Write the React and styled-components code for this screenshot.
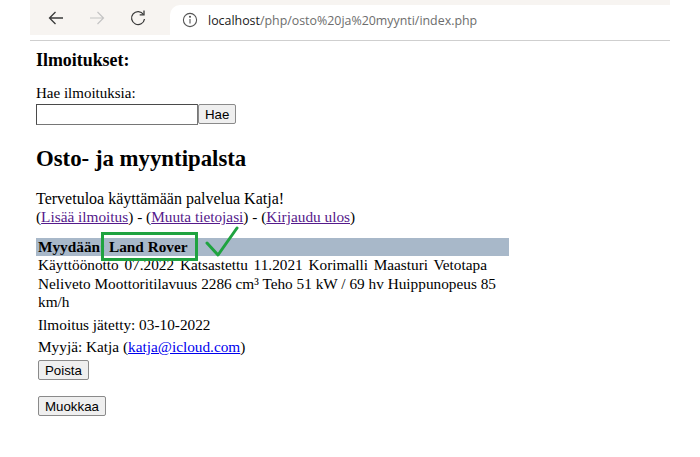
import React from "react";
import styled, { createGlobalStyle } from "styled-components";

const Global = createGlobalStyle`
  html, body { margin: 0; padding: 0; background: #fff; }
  body { font-family: "Liberation Serif", "Times New Roman", serif; font-size: 15.3px; color: #000; }
`;

const Page = styled.div`
  position: relative;
  min-height: 457px;
`;

const Chrome = styled.div`
  margin: 0 30px;
  height: 40px;
  border-bottom: 1px solid #cfcfcf;
  display: flex;
  flex-direction: column;
`;

const ToolBar = styled.div`
  height: 35px;
  background: #f7f4f1;
  display: flex;
  align-items: center;
`;

const NavButton = styled.div`
  width: 41px;
  height: 35px;
  display: flex;
  align-items: center;
  justify-content: center;
  flex: none;
  &:first-child { margin-left: 5px; }
`;

const AddressBar = styled.div`
  flex: 1;
  align-self: stretch;
  margin: 5px 0 0 12px;
  background: #fff;
  border-radius: 10px 0 0 0;
  display: flex;
  align-items: center;
  padding-left: 12px;
  gap: 10px;
  font-family: "Open Sans", "Noto Sans", sans-serif;
  font-size: 12.4px;
  color: #6d6d6d;
`;

const Host = styled.span`
  color: #202020;
`;

const Content = styled.main`
  padding: 0 0 0 36px;
`;

const SectionTitle = styled.h3`
  font-size: 17.9px;
  font-weight: bold;
  margin: 9px 0 13px;
`;

const SearchForm = styled.form`
  margin: 0;
  font-size: 15px;
  line-height: 18px;
`;

const SearchInput = styled.input`
  box-sizing: border-box;
  width: 162px;
  height: 21px;
  margin: 2px 0 0;
  padding: 0 2px;
  border: 1px solid #767676;
  border-top-color: #4a4a4a;
  border-left-color: #4a4a4a;
  vertical-align: top;
  font-size: 13px;
`;

const Button = styled.button`
  box-sizing: border-box;
  height: 20px;
  padding: 0 ${(p) => p.$px || 6}px;
  font-family: "Liberation Sans", Arial, sans-serif;
  font-size: 13.3px;
  color: #000;
  background: #efefef;
  border: 1px solid #8a8a8a;
  border-radius: 2px;
  vertical-align: top;
  margin: ${(p) => p.$m || "0"};
`;

const PageTitle = styled.h2`
  font-size: 22.8px;
  font-weight: bold;
  margin: 21px 0 18px;
`;

const Welcome = styled.p`
  margin: 0 0 12px;
  line-height: 18px;
`;

const Greeting = styled.span`
  font-size: 16px;
`;

const Link = styled.a`
  color: ${(p) => (p.$visited ? "#551a8b" : "#0000ee")};
  text-decoration: underline;
`;

const AdTable = styled.table`
  width: 473px;
  border-spacing: 0;
  border-collapse: collapse;
`;

const HeadCell = styled.th`
  background: #a8b8c9;
  text-align: left;
  padding: 0 2px;
  height: 18px;
  line-height: 18px;
  font-weight: bold;
`;

const Cell = styled.td`
  padding: ${(p) => p.$pad || "2px 2px 1.5px"};
  line-height: 18.5px;
`;

const Spaced = styled.span`
  word-spacing: 1.9px;
`;

const ButtonStack = styled.div`
  display: flex;
  flex-direction: column;
  align-items: flex-start;
  gap: 16px;
  padding-top: 0;
`;

const Annotation = styled.svg`
  position: absolute;
  left: 0;
  top: 0;
  overflow: visible;
  pointer-events: none;
`;

const BackIcon = () => (
  <svg width="18" height="18" viewBox="0 0 18 18" fill="none" stroke="#3a3a3a" strokeWidth="1.3">
    <path d="M16 9H2.5M8.5 3L2.5 9l6 6" />
  </svg>
);
const FwdIcon = () => (
  <svg width="18" height="18" viewBox="0 0 18 18" fill="none" stroke="#c4c4c4" strokeWidth="1.2">
    <path d="M2 9h13.5M9.5 3l6 6-6 6" />
  </svg>
);
const ReloadIcon = () => (
  <svg width="18" height="18" viewBox="0 0 18 18" fill="none" stroke="#3a3a3a" strokeWidth="1.3">
    <path d="M14.5 5.5A6.5 6.5 0 1 0 15.5 10" />
    <path d="M15 1.5v4.3h-4.3" />
  </svg>
);
const InfoIcon = () => (
  <svg width="16" height="16" viewBox="0 0 16 16" fill="none" stroke="#555" strokeWidth="1.1">
    <circle cx="8" cy="8" r="6.6" />
    <path d="M8 7v4.5" />
    <circle cx="8" cy="4.8" r="0.5" fill="#555" />
  </svg>
);

export default function App() {
  return (
    <Page>
      <Global />
      <Chrome>
        <ToolBar>
          <NavButton><BackIcon /></NavButton>
          <NavButton><FwdIcon /></NavButton>
          <NavButton><ReloadIcon /></NavButton>
          <AddressBar>
            <InfoIcon />
            <span><Host>localhost</Host>/php/osto%20ja%20myynti/index.php</span>
          </AddressBar>
        </ToolBar>
      </Chrome>
      <Content>
        <SectionTitle>Ilmoitukset:</SectionTitle>
        <SearchForm onSubmit={(e) => e.preventDefault()}>
          Hae ilmoituksia:
          <br />
          <SearchInput type="text" />
          <Button $px={6} $m="2px 0 0">Hae</Button>
        </SearchForm>
        <PageTitle>Osto- ja myyntipalsta</PageTitle>
        <Welcome>
          <Greeting>Tervetuloa käyttämään palvelua Katja!</Greeting>
          <br />
          (<Link $visited href="#">Lisää ilmoitus</Link>) - (<Link $visited href="#">Muuta tietojasi</Link>) - (<Link $visited href="#">Kirjaudu ulos</Link>)
        </Welcome>
        <AdTable>
          <tbody>
            <tr><HeadCell>Myydään: Land Rover</HeadCell></tr>
            <tr>
              <Cell $pad="0 2px 2.5px">
                <Spaced>Käyttöönotto 07.2022 Katsastettu 11.2021 Korimalli Maasturi Vetotapa</Spaced>{" "}
                Neliveto Moottoritilavuus 2286 cm³ Teho 51 kW / 69 hv Huippunopeus 85 km/h
              </Cell>
            </tr>
            <tr><Cell>Ilmoitus jätetty: 03-10-2022</Cell></tr>
            <tr><Cell>Myyjä: Katja (<Link href="#">katja@icloud.com</Link>)</Cell></tr>
            <tr>
              <Cell>
                <ButtonStack>
                  <Button>Poista</Button>
                  <Button>Muokkaa</Button>
                </ButtonStack>
              </Cell>
            </tr>
          </tbody>
        </AdTable>
      </Content>
      <Annotation width="1" height="1">
        <rect x="102.5" y="233.5" width="94" height="26" fill="none" stroke="#1fa340" strokeWidth="3" />
        <path d="M207 243 L218 255 L237 228" fill="none" stroke="#1fa340" strokeWidth="3" strokeLinecap="round" strokeLinejoin="round" />
      </Annotation>
    </Page>
  );
}
